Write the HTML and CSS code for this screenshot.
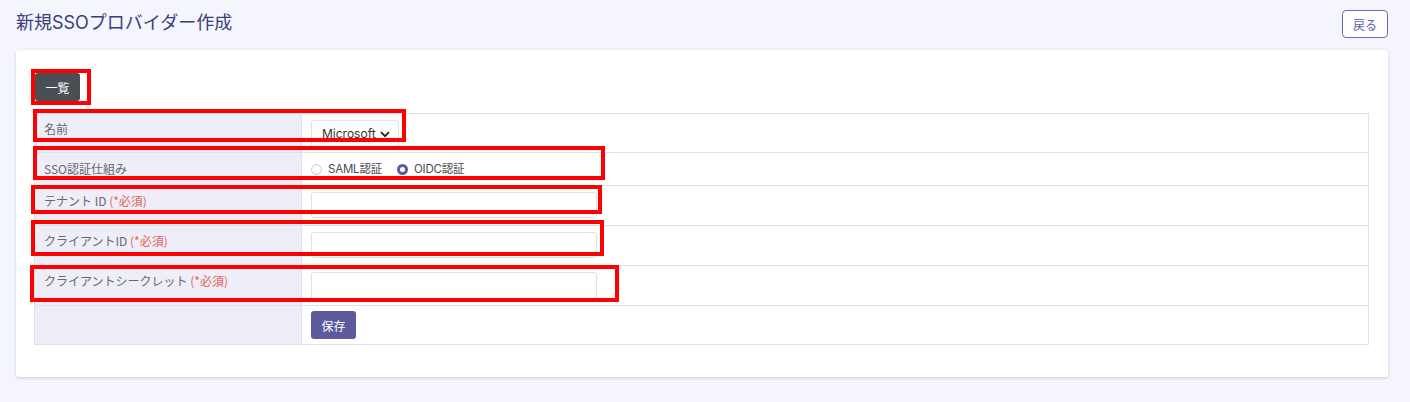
FILE: index.html
```html
<!DOCTYPE html>
<html lang="ja">
<head>
<meta charset="utf-8">
<link rel="stylesheet" href="styles.css">
</head>
<body>
<div class="page">
  <header class="head">
    <h1 class="title">新規SSOプロバイダー作成</h1>
    <button class="btn-back">戻る</button>
  </header>
  <section class="card">
    <button class="btn-list">一覧</button>
    <table class="form-table">
      <tr class="r1">
        <th>名前</th>
        <td><span class="select">Microsoft<svg width="10" height="7" viewBox="0 0 10 7"><path d="M1 1.2 L5 5.2 L9 1.2" fill="none" stroke="#222" stroke-width="1.8"/></svg></span></td>
      </tr>
      <tr class="r2">
        <th>SSO認証仕組み</th>
        <td>
          <div class="radios">
            <span class="radio"><span class="dot"></span>SAML認証</span>
            <span class="radio on"><span class="dot"></span>OIDC認証</span>
          </div>
        </td>
      </tr>
      <tr class="r3">
        <th>テナント ID <span class="req">(*必須)</span></th>
        <td><span class="input"></span></td>
      </tr>
      <tr class="r3">
        <th>クライアントID <span class="req">(*必須)</span></th>
        <td><span class="input"></span></td>
      </tr>
      <tr class="r3">
        <th>クライアントシークレット <span class="req">(*必須)</span></th>
        <td><span class="input tall"></span></td>
      </tr>
      <tr class="r6">
        <th></th>
        <td><button class="btn-save">保存</button></td>
      </tr>
    </table>
  </section>
  <div class="mark m1"></div>
  <div class="mark m2"></div>
  <div class="mark m3"></div>
  <div class="mark m4"></div>
  <div class="mark m5"></div>
  <div class="mark m6"></div>
</div>
</body>
</html>
```

FILE: styles.css
```css
* { box-sizing: border-box; }
html, body { margin: 0; padding: 0; }
body {
  background: #f4f5fd;
  font-family: "Inter", "Noto Sans CJK JP", sans-serif;
  color: #555;
  width: 1410px;
  height: 402px;
  overflow: hidden;
}
.page { position: relative; height: 402px; }
.head {
  display: flex;
  justify-content: space-between;
  align-items: flex-start;
  padding: 10px 22px 0 16px;
  height: 50px;
}
.title {
  margin: 0;
  padding-top: 1px;
  font-size: 18px;
  font-weight: 400;
  color: #3c3e7c;
  line-height: 24px;
}
.btn-back {
  width: 46px;
  height: 28px;
  border: 1px solid #6b68c2;
  border-radius: 4px;
  background: #fff;
  color: #5d5bb2;
  font-family: "Noto Sans CJK JP", sans-serif;
  font-size: 12px;
  padding: 0;
}
.card {
  margin: 0 22px 0 16px;
  background: #fff;
  border-radius: 3px;
  box-shadow: 0 1px 3px rgba(90, 95, 140, 0.28);
  padding: 23px 18px 33px 18px;
  height: 327px;
}
.btn-list {
  display: block;
  margin-left: 1px;
  width: 45px;
  height: 28px;
  border: none;
  border-radius: 3px;
  background: #4a4f56;
  color: #fff;
  font-family: "Noto Sans CJK JP", sans-serif;
  font-size: 12px;
  padding: 0;
  margin-bottom: 12px;
}
.form-table {
  width: 1335px;
  border-collapse: collapse;
  font-size: 12px;
}
.form-table th, .form-table td {
  border: 1px solid #e0e1e6;
  vertical-align: top;
  text-align: left;
  padding: 0;
}
.form-table th {
  width: 267px;
  background: #eeeef8;
  font-weight: 400;
  color: #67676f;
  padding: 8px 0 0 9px;
  line-height: 14px;
  font-family: "Noto Sans CJK JP", sans-serif;
}
.form-table td { padding: 6px 0 0 9px; }
.r1 { height: 39px; }
.r2 { height: 33px; }
.r2 th { padding-top: 9px; }
.r3 { height: 40px; }
.r6 { height: 39px; }
.req { color: #e4625b; }
.select {
  display: inline-flex;
  align-items: center;
  gap: 4px;
  height: 27px;
  width: 88px;
  border: 1px solid #e2e3e8;
  border-radius: 3px;
  padding: 0 0 0 10px;
  font-size: 12px;
  color: #333;
  font-family: "Inter", sans-serif;
}
.select svg { margin-top: 1px; }
.r2 td { padding-top: 9px; }
.radios { display: flex; align-items: center; gap: 15px; }
.radio {
  display: inline-flex;
  align-items: center;
  gap: 6px;
  font-size: 11.5px;
  color: #4a4a52;
  font-family: "Inter", "Noto Sans CJK JP", sans-serif;
  line-height: 14px;
  letter-spacing: -0.2px;
}
.dot {
  width: 11px;
  height: 11px;
  border-radius: 50%;
  border: 1px solid #c9cad0;
  background: #fff;
}
.on .dot {
  border: 3px solid #5c5aa6;
  background: #fff;
}
.input {
  display: block;
  width: 286px;
  height: 26px;
  border: 1px solid #e0e1e6;
  border-radius: 3px;
  background: #fff;
}
.tall { height: 28px; }
.btn-save {
  width: 45px;
  height: 28px;
  border: none;
  border-radius: 3px;
  background: #5c5a9d;
  color: #fff;
  font-family: "Noto Sans CJK JP", sans-serif;
  font-size: 12px;
  padding: 0;
  margin-top: -1px;
}
.mark {
  position: absolute;
  border: 4px solid #ff0000;
}
.m1 { left: 31px; top: 69px; width: 60px; height: 36px; }
.m2 { left: 33px; top: 109px; width: 373px; height: 33px; }
.m3 { left: 33px; top: 146px; width: 572px; height: 34px; }
.m4 { left: 31px; top: 185px; width: 571px; height: 29px; }
.m5 { left: 31px; top: 220px; width: 573px; height: 36px; }
.m6 { left: 30px; top: 265px; width: 589px; height: 37px; }
```
